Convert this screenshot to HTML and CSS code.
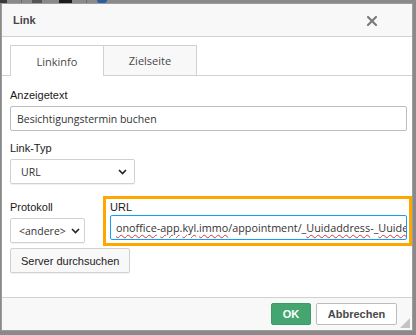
FILE: index.html
```html
<!DOCTYPE html>
<html lang="de">
<head>
<meta charset="utf-8">
<title>Link</title>
<link rel="stylesheet" href="styles.css">
</head>
<body>
<div class="toolbar">
  <span class="tb tb-a"></span><span class="tb-sep"></span><span class="tb tb-b"></span><span class="tb tb-c"></span><span class="tb-sep"></span><span class="tb tb-d"></span>
</div>
<div class="dialog">
  <div class="title">
    <span class="title-text">Link</span>
    <svg class="close" width="10" height="10" viewBox="0 0 10 10"><path d="M1 1L9 9M9 1L1 9" stroke="#7a7a7a" stroke-width="2.1" stroke-linecap="square"/></svg>
  </div>
  <div class="body">
    <div class="tabs">
      <div class="tab active">Linkinfo</div>
      <div class="tab">Zielseite</div>
    </div>
    <div class="contents">
      <div class="field">
        <div class="label">Anzeigetext</div>
        <div class="input">Besichtigungstermin buchen</div>
      </div>
      <div class="field field-type">
        <div class="label">Link-Typ</div>
        <div class="select select-type"><span>URL</span>
          <svg class="chev" width="9" height="6" viewBox="0 0 9 6"><path d="M1 1L4.5 4.5L8 1" fill="none" stroke="#222" stroke-width="1.6"/></svg>
        </div>
      </div>
      <div class="row">
        <div class="col-proto">
          <div class="label">Protokoll</div>
          <div class="select select-proto"><span>&lt;andere&gt;</span>
            <svg class="chev" width="9" height="6" viewBox="0 0 9 6"><path d="M1 1L4.5 4.5L8 1" fill="none" stroke="#222" stroke-width="1.6"/></svg>
          </div>
        </div>
        <div class="col-url">
          <div class="label">URL</div>
          <div class="input focus"><span class="sp">onoffice</span>-<span class="sp">app</span>.<span class="sp">kyl</span>.<span class="sp">immo</span>/appointment/_<span class="sp">Uuidaddress</span>-_<span class="sp">Uuide</span></div>
        </div>
      </div>
      <div class="btn-row">
        <div class="btn">Server durchsuchen</div>
      </div>
    </div>
  </div>
  <div class="footer">
    <div class="btn-ok">OK</div>
    <div class="btn-cancel">Abbrechen</div>
    <svg class="resize" width="10" height="10" viewBox="0 0 10 10"><path d="M10 0L10 10L0 10Z" fill="#c4c4c4"/></svg>
  </div>
</div>
</body>
</html>
```
FILE: styles.css
```css
html, body {
  margin: 0;
  padding: 0;
}
body {
  background: #8a8a8a;
  width: 416px;
  height: 335px;
  overflow: hidden;
  font-family: "Liberation Sans", Arial, sans-serif;
  font-size: 11px;
  color: #222;
}
.toolbar {
  height: 3px;
  display: flex;
  align-items: flex-start;
  overflow: hidden;
}
.tb { height: 3px; display: block; }
.tb-a { width: 7px; background: #3a3a3a; }
.tb-sep { width: 1px; height: 3px; background: #6a6a6a; margin: 0 10px 0 14px; }
.tb-b { width: 10px; background: #555; }
.tb-c { width: 13px; background: #1c1c1c; margin-left: 17px; }
.tb-d { width: 10px; background: #2d5e9e; border-radius: 0 0 5px 5px; }
.dialog {
  margin-left: 1px;
  width: 410px;
  height: 326px;
  border: 1px solid #9c9c9c;
  background: #fff;
  display: flex;
  flex-direction: column;
  position: relative;
}
.title {
  height: 32px;
  background: #f8f8f8;
  border-bottom: 1px solid #d1d1d1;
  display: flex;
  align-items: center;
  justify-content: space-between;
  padding: 0 35px 0 11px;
}
.title-text {
  font-weight: bold;
  font-size: 11px;
  color: #484848;
}
.close { display: block; margin-top: 1px; }
.body {
  flex: 1;
  display: flex;
  flex-direction: column;
}
.tabs {
  margin-top: 8px;
  display: flex;
  padding-left: 8px;
  border-bottom: 1px solid #d1d1d1;
  height: 30px;
}
.tab {
  width: 92px;
  height: 29px;
  border: 1px solid #d1d1d1;
  border-bottom: none;
  background: #f8f8f8;
  font-family: "Open Sans", sans-serif;
  font-size: 11px;
  color: #484848;
  display: flex;
  align-items: center;
  justify-content: center;
  margin-right: -1px;
}
.tab.active {
  background: #fff;
  height: 30px;
  position: relative;
  z-index: 1;
}
.contents {
  padding: 13px 5px 0 8px;
  display: flex;
  flex-direction: column;
}
.label {
  font-size: 11px;
  line-height: 13px;
  color: #1a1a1a;
  margin-bottom: 4px;
}
.input {
  height: 23px;
  border: 1px solid #bcbcbc;
  border-radius: 2px;
  padding: 0 6px;
  display: flex;
  align-items: center;
  font-family: "Open Sans", sans-serif;
  font-size: 10.5px;
  color: #333;
  white-space: nowrap;
  overflow: hidden;
}
.field-type { margin-top: 11px; }
.select {
  height: 23px;
  border: 1px solid #d1d1d1;
  border-radius: 2px;
  display: flex;
  align-items: center;
  justify-content: space-between;
  font-family: "Open Sans", sans-serif;
  font-size: 10.5px;
  color: #333;
  box-shadow: 0 1px 1px rgba(0,0,0,0.06);
}
.select-type { width: 106px; padding: 0 7px 0 10px; }
.select-proto { width: 61px; padding: 0 4px 0 8px; }
.chev { display: block; }
.row {
  margin-top: 12px;
  display: flex;
  align-items: flex-start;
}
.col-proto {
  padding-top: 5px;
  width: 75px;
  margin-right: 18px;
}
.col-url {
  flex: 1;
  min-width: 0;
  margin-right: -5px;
  border: 3px solid #ffa600;
  padding: 2px 2px 3px 4px;
}
.col-url .label { margin-bottom: 1px; }
.input.focus {
  border-color: #139ff7;
  padding: 0 4px 0 5px;
  font-size: 10.8px;
  min-width: 0;
  overflow: hidden;
}
.sp {
  text-decoration: underline wavy #e03030;
  text-decoration-thickness: 1px;
  text-underline-offset: 2px;
}
.btn-row { margin-top: 2px; display: flex; }
.btn {
  height: 23px;
  border: 1px solid #d1d1d1;
  border-radius: 2px;
  background: #f8f8f8;
  padding: 0 10px;
  display: flex;
  align-items: center;
  font-size: 11px;
  color: #222;
  box-shadow: 0 1px 1px rgba(0,0,0,0.06);
}
.footer {
  height: 32px;
  border-top: 1px solid #d1d1d1;
  background: #f8f8f8;
  display: flex;
  align-items: center;
  justify-content: flex-end;
  padding-right: 15px;
  gap: 5px;
  position: relative;
}
.btn-ok {
  width: 38px;
  height: 20px;
  border: 1px solid #3f9a67;
  background: #45a571;
  color: #fff;
  font-weight: bold;
  font-size: 11px;
  display: flex;
  align-items: center;
  justify-content: center;
  border-radius: 2px;
}
.btn-cancel {
  width: 79px;
  height: 20px;
  border: 1px solid #bcbcbc;
  background: #fff;
  color: #484848;
  font-weight: bold;
  font-size: 11px;
  display: flex;
  align-items: center;
  justify-content: center;
  border-radius: 2px;
}
.resize {
  position: absolute;
  right: 2px;
  bottom: 2px;
}
```
